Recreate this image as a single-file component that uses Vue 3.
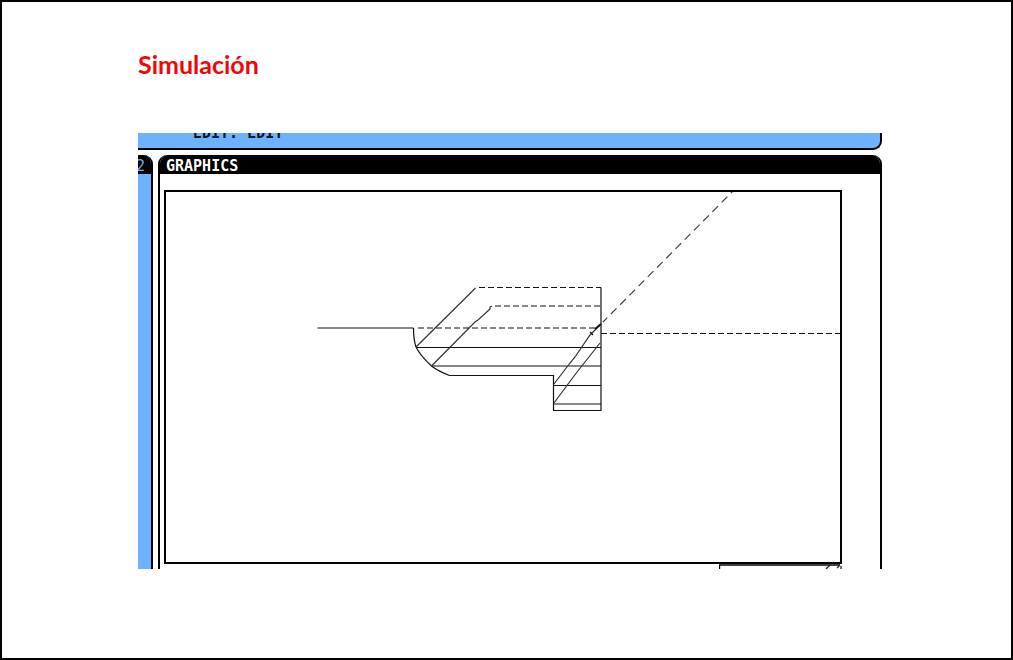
<script setup>
const solidLines = [
  'M317.5 328H413.5',
  'M413.5 328C413.5 337 414 341 416 347C420 355 425 360 431.5 366C438 371 443 373 449.5 375.5H553.5V410.5H601V287.5',
  'M416 347.5H601',
  'M431.5 366H601',
  'M553.5 385.5H601',
  'M553.5 404H601'
]
const slantedLines = [
  'M416 347L475.5 288',
  'M431.5 366L475 322L478 320L490 309V307L492 306',
  'M554 384L570 363L575 357L590 335L600 325',
  'M554 403L574 376L581 367L600 343'
]
const dashedLines = [
  'M479 287.5H601',
  'M495 306H601',
  'M418 328H597',
  'M601 333.5H840'
]
</script>

<template>
  <main class="slide">
    <h1 class="title">Simulación</h1>
    <section class="screen">
      <div class="status"><span class="status-text">EDIT. EDIT</span></div>
      <div class="panels">
        <aside class="side">
          <header class="bar side-bar">2</header>
        </aside>
        <section class="graphics">
          <header class="bar graphics-bar">GRAPHICS</header>
          <div class="viewport">
            <svg class="plot" viewBox="166 192 674 370" role="img" aria-label="Simulación">
              <g fill="none" stroke="#111" stroke-width="1.2">
                <path v-for="d in solidLines" :key="d" :d="d" />
                <path v-for="d in slantedLines" :key="d" :d="d" stroke="#333" />
                <path v-for="d in dashedLines" :key="d" :d="d" stroke-dasharray="6 3" />
                <path d="M733 191L603 322" stroke="#444" stroke-dasharray="8 5.1" stroke-dashoffset="5" />
                <path d="M595 329L601 324" stroke-width="2" />
                <path d="M590 332L593 335" />
              </g>
            </svg>
          </div>
          <div class="lower">
            <svg class="corner" viewBox="0 0 123 5" aria-hidden="true">
              <path d="M0.5 5V1H121" fill="none" stroke="#000" stroke-width="1.4" />
              <path d="M107 5L111 1M118 4L121 1M122 2V5" fill="none" stroke="#222" stroke-width="1.3" />
            </svg>
          </div>
        </section>
      </div>
    </section>
  </main>
</template>

<style>
body {
  margin: 0;
}
</style>

<style scoped>
.slide {
  box-sizing: border-box;
  min-height: 100vh;
  padding: 46px 129px 88px 136px;
  border: 2px solid #000;
  background: #fff;
}
.title {
  margin: 0 0 53px;
  color: #f20505;
  font: 700 25px/32px Lato, "Open Sans", sans-serif;
}
.screen {
  overflow: hidden;
  font: 700 15px/22px "DejaVu Sans Mono", monospace;
}
.status {
  display: flex;
  align-items: flex-end;
  box-sizing: border-box;
  height: 17px;
  padding: 0 0 4px 55px;
  overflow: hidden;
  border: solid #000;
  border-width: 0 2px 2px 0;
  border-bottom-right-radius: 9px;
  background: #6cb2fd;
}
.status-text {
  color: #06122c;
}
.panels {
  display: flex;
  gap: 5px;
  margin-top: 5px;
}
.bar {
  height: 19px;
  background: #000;
}
.side {
  box-sizing: border-box;
  width: 15px;
  overflow: hidden;
  border-right: 2px solid #000;
  border-top-right-radius: 9px;
  background: #6cb2fd;
}
.side-bar {
  color: #6cb2fd;
  font-weight: 400;
  text-indent: -2px;
}
.graphics {
  flex: 1;
  min-width: 0;
  overflow: hidden;
  border: solid #000;
  border-width: 0 2px;
  border-radius: 9px 9px 0 0;
}
.graphics-bar {
  padding-left: 6px;
  color: #fff;
}
.viewport {
  margin: 16px 38px 0 4px;
  border: 2px solid #000;
}
.plot {
  display: block;
  width: 100%;
}
.lower {
  display: flex;
  justify-content: flex-end;
  margin-right: 38px;
}
.corner {
  display: block;
  width: 123px;
  height: 5px;
}
</style>
